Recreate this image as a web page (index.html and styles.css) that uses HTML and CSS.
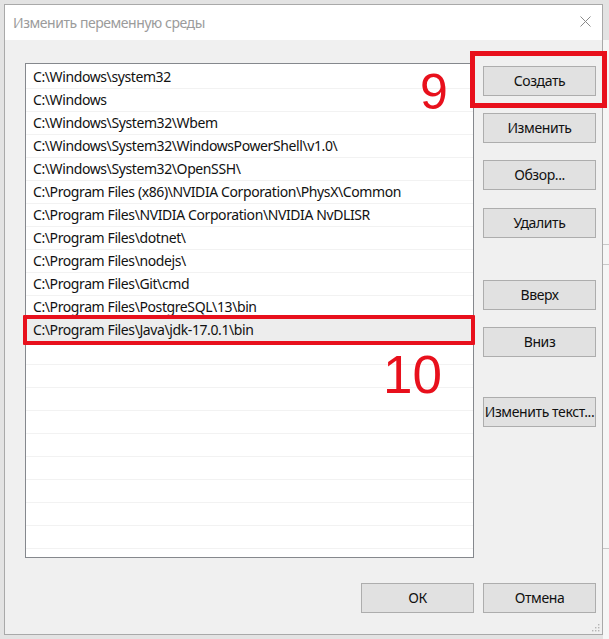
FILE: index.html
```html
<!DOCTYPE html>
<html lang="ru">
<head>
<meta charset="utf-8">
<title>Изменить переменную среды</title>
<link rel="stylesheet" href="styles.css">
</head>
<body>
<div class="bgwin"></div>
<div class="window">
  <div class="titlebar">
    <span class="title">Изменить переменную среды</span>
    <svg class="close" width="11" height="11" viewBox="0 0 11 11"><path d="M0.5 0.5 L10.5 10.5 M10.5 0.5 L0.5 10.5" stroke="#8a8a8a" stroke-width="1" fill="none"/></svg>
  </div>
  <div class="content">
    <div class="main">
      <div class="list">
        <div class="row">C:\Windows\system32</div>
        <div class="row">C:\Windows</div>
        <div class="row">C:\Windows\System32\Wbem</div>
        <div class="row">C:\Windows\System32\WindowsPowerShell\v1.0\</div>
        <div class="row">C:\Windows\System32\OpenSSH\</div>
        <div class="row">C:\Program Files (x86)\NVIDIA Corporation\PhysX\Common</div>
        <div class="row">C:\Program Files\NVIDIA Corporation\NVIDIA NvDLISR</div>
        <div class="row">C:\Program Files\dotnet\</div>
        <div class="row">C:\Program Files\nodejs\</div>
        <div class="row">C:\Program Files\Git\cmd</div>
        <div class="row">C:\Program Files\PostgreSQL\13\bin</div>
        <div class="row selected">C:\Program Files\Java\jdk-17.0.1\bin</div>
        <div class="row"></div>
        <div class="row"></div>
        <div class="row"></div>
        <div class="row"></div>
        <div class="row"></div>
        <div class="row"></div>
        <div class="row"></div>
        <div class="row"></div>
        <div class="row"></div>
        <div class="row"></div>
      </div>
      <div class="side">
        <button class="btn">Создать</button>
        <button class="btn">Изменить</button>
        <button class="btn">Обзор...</button>
        <button class="btn gap1">Удалить</button>
        <button class="btn gap-big">Вверх</button>
        <button class="btn">Вниз</button>
        <button class="btn gap-mid">Изменить текст...</button>
      </div>
    </div>
    <div class="footer">
      <button class="btn">ОК</button>
      <button class="btn">Отмена</button>
    </div>
  </div>
  <svg class="grip" width="8" height="8" viewBox="0 0 8 8">
    <rect x="6" y="0" width="1.4" height="1.4" fill="#b5b5b5"/>
    <rect x="3" y="3" width="1.4" height="1.4" fill="#b5b5b5"/>
    <rect x="6" y="3" width="1.4" height="1.4" fill="#b5b5b5"/>
    <rect x="0" y="6" width="1.4" height="1.4" fill="#b5b5b5"/>
    <rect x="3" y="6" width="1.4" height="1.4" fill="#b5b5b5"/>
    <rect x="6" y="6" width="1.4" height="1.4" fill="#b5b5b5"/>
  </svg>
</div>
<div class="mark mark-create"></div>
<div class="mark mark-row"></div>
<div class="num num-9">9</div>
<div class="num num-10">10</div>
</body>
</html>
```
FILE: styles.css
```css
html, body {
  margin: 0;
  padding: 0;
}
body {
  width: 609px;
  height: 639px;
  overflow: hidden;
  position: relative;
  background: #e3e3e3;
  font-family: "Noto Sans", "Open Sans", sans-serif;
  letter-spacing: -0.4px;
}
.bgwin {
  position: absolute;
  left: 603px;
  top: 0;
  width: 6px;
  height: 639px;
  background:
    linear-gradient(#e3e3e3 0 40px, transparent 40px),
    linear-gradient(transparent 244px, #c8c8c8 244px 245px, transparent 245px 264px, #c8c8c8 264px 265px, transparent 265px 548px, #c8c8c8 548px 549px, transparent 549px),
    #f6f6f6;
}
.window {
  position: relative;
  margin: 4px 0 0 4px;
  width: 599px;
  height: 631px;
  box-sizing: border-box;
  border: 1px solid #a9a9a9;
  background: #f0f0f0;
  display: flex;
  flex-direction: column;
}
.titlebar {
  height: 35px;
  flex: none;
  background: #ffffff;
  display: flex;
  align-items: center;
  justify-content: space-between;
  padding: 0 11px 0 8px;
}
.title {
  font-size: 14px;
  color: #9b9b9b;
  margin-top: -1px;
  letter-spacing: -0.45px;
}
.close {
  display: block;
  margin-top: -2px;
}
.content {
  padding: 23px 0 0 20px;
}
.main {
  display: flex;
  gap: 9px;
}
.list {
  width: 449px;
  height: 495px;
  box-sizing: border-box;
  border: 1px solid #85888d;
  background: #ffffff;
  padding-top: 2px;
  overflow: hidden;
}
.row {
  height: 23px;
  box-sizing: border-box;
  border-bottom: 1px solid #f2f2f2;
  padding-left: 7px;
  font-size: 14px;
  line-height: 22px;
  color: #111;
  white-space: nowrap;
}
.row.selected {
  background: #ededed;
}
.side {
  display: flex;
  flex-direction: column;
  gap: 17px;
  padding-top: 3px;
}
.btn {
  width: 113px;
  height: 30px;
  box-sizing: border-box;
  margin: 0;
  padding: 0;
  border: 1px solid #adadad;
  background: #e1e1e1;
  color: #111;
  font-family: "Noto Sans", "Open Sans", sans-serif;
  font-size: 14px;
  letter-spacing: -0.4px;
  line-height: 28px;
  text-align: center;
  white-space: nowrap;
}
.gap1 {
  margin-top: 1px;
}
.gap-big {
  margin-top: 25px;
}
.gap-mid {
  margin-top: 23px;
}
.footer {
  display: flex;
  justify-content: flex-end;
  gap: 9px;
  margin-top: 25px;
  padding-right: 6px;
}
.grip {
  position: absolute;
  right: 2px;
  bottom: 2px;
}
.mark {
  position: absolute;
  box-sizing: border-box;
  border-style: solid;
  border-color: #e8101c;
}
.mark-create {
  left: 470px;
  top: 51px;
  width: 137px;
  height: 57px;
  border-width: 5px;
}
.mark-row {
  left: 23px;
  top: 315px;
  width: 452px;
  height: 30px;
  border-width: 4px;
  border-radius: 1px;
}
.num {
  position: absolute;
  font-family: "Liberation Sans", Arial, sans-serif;
  color: #e8101c;
  line-height: 1;
  letter-spacing: 0;
}
.num-9 {
  left: 420px;
  top: 67px;
  font-size: 50px;
}
.num-10 {
  left: 383px;
  top: 348px;
  font-size: 53px;
}
```
